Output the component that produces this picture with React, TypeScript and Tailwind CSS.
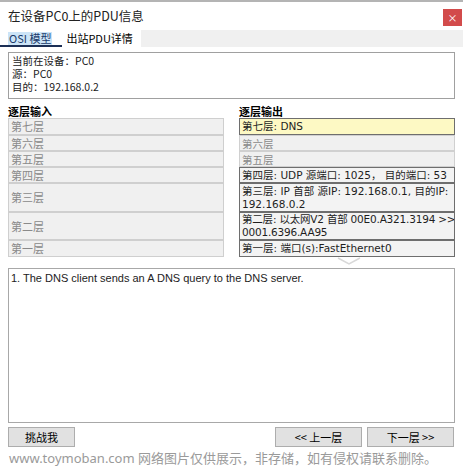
import React from 'react';

const cjk = { fontFamily: '"Noto Sans CJK SC", "Noto Sans", sans-serif' };
const verdana = { fontFamily: '"DejaVu Sans", "Noto Sans CJK SC", sans-serif' };

const inLayers = [
  { label: '第七层', h: 'h-[17px]' },
  { label: '第六层', h: 'h-[16px]' },
  { label: '第五层', h: 'h-[16px]' },
  { label: '第四层', h: 'h-[16px]' },
  { label: '第三层', h: 'h-[29px]' },
  { label: '第二层', h: 'h-[28px]' },
  { label: '第一层', h: 'h-[17px]' },
];

const outLayers = [
  { lines: ['第七层:  DNS'], h: 'h-[17px]', active: true, hl: true },
  { lines: ['第六层'], h: 'h-[16px]', active: false },
  { lines: ['第五层'], h: 'h-[16px]', active: false },
  { lines: ['第四层:  UDP 源端口: 1025， 目的端口: 53'], h: 'h-[16px]', active: true },
  { lines: ['第三层:  IP 首部 源IP: 192.168.0.1, 目的IP:', '192.168.0.2'], h: 'h-[29px]', active: true },
  { lines: ['第二层:  以太网V2 首部 00E0.A321.3194 >>', '0001.6396.AA95'], h: 'h-[28px]', active: true },
  { lines: ['第一层:  端口(s):FastEthernet0'], h: 'h-[17px]', active: true },
];

export default function App() {
  return (
    <div className="w-[463px] h-[466px] bg-white border-t-2 border-[#b4b4b4] relative overflow-hidden text-black" style={cjk}>
      {/* title bar */}
      <div className="h-[28px] flex items-center justify-between pl-[8px]">
        <span className="text-[12.5px] text-[#222]">在设备PC0上的PDU信息</span>
        <div className="w-[19px] h-[17px] bg-[#d24b4b] flex items-center justify-center text-white text-[10px] mr-[1px] mt-[2px]">×</div>
      </div>

      {/* tabs */}
      <div className="flex h-[17px] bg-[#f0f0f0]">
        <div className="bg-white flex items-end pr-[6px]">
          <div className="relative px-[8px] h-full flex items-center">
            <span className="text-[11px] bg-[#cce4f7] text-[#1a3a6a] px-[1px] leading-[13px]">OSI 模型</span>
            <div className="absolute left-0 right-[-2px] bottom-0 h-[2px] bg-[#1c2f55]" />
          </div>
          <div className="pl-[6px] pr-[2px] h-full flex items-center text-[11px]">出站PDU详情</div>
        </div>
      </div>

      {/* info box */}
      <div className="mx-[8px] mt-[5px] h-[47px] border border-[#a0a0a0] px-[3px] pt-[1px] text-[10.5px] text-[#222]">
        <div className="h-[13px] leading-[13px] overflow-visible">当前在设备：PC0</div>
        <div className="h-[13px] leading-[13px]">源：PC0</div>
        <div className="h-[13px] leading-[13px]">目的：192.168.0.2</div>
      </div>

      {/* layers */}
      <div className="flex px-[8px] mt-[5px] gap-[15px]">
        <div className="w-[216px]">
          <div className="text-[11px] font-bold h-[14px] leading-[14px]">逐层输入</div>
          <div className="flex flex-col">
            {inLayers.map((l) => (
              <div key={l.label} className={`${l.h} border border-[#cfcfcf] bg-[#f0f0f0] flex items-center px-[2px] text-[11px] text-[#8a8a8a]`}>
                {l.label}
              </div>
            ))}
          </div>
        </div>
        <div className="w-[216px]">
          <div className="text-[11px] font-bold h-[14px] leading-[14px]">逐层输出</div>
          <div className="flex flex-col">
            {outLayers.map((l) => (
              <div
                key={l.lines[0]}
                className={`${l.h} border flex flex-col justify-center px-[2px] text-[10.5px] leading-[13px] whitespace-nowrap overflow-hidden ${
                  l.active
                    ? `border-[#6e6e6e] text-[#1e1e1e] ${l.hl ? 'bg-[#fdf9c4]' : 'bg-[#f3f3f3]'}`
                    : 'border-[#d0d0d0] bg-[#f0f0f0] text-[#8a8a8a]'
                }`}
                style={l.active ? verdana : cjk}
              >
                {l.lines.map((t) => (
                  <span key={t} className={l.lines[0].startsWith('第二层') ? 'tracking-[-0.2px]' : ''}>{t}</span>
                ))}
              </div>
            ))}
          </div>
          <div className="flex justify-center h-[11px] pl-[4px]">
            <svg width="24" height="9" viewBox="0 0 24 9">
              <path d="M1 1 L12 7 L23 1" fill="none" stroke="#d8d8d8" strokeWidth="1.5" />
            </svg>
          </div>
        </div>
      </div>

      {/* description */}
      <div
        className="mx-[8px] h-[155px] border border-[#a8a8a8] px-[2px] pt-[2px] text-[11px] leading-[14px] text-[#222]"
        style={{ fontFamily: '"Liberation Sans", Arial, sans-serif' }}
      >
        1. The DNS client sends an A DNS query to the DNS server.
      </div>

      {/* buttons */}
      <div className="flex justify-between px-[8px] mt-[4px]">
        <button className="w-[67px] h-[20px] bg-[#e1e1e1] border border-[#adadad] text-[11px]">挑战我</button>
        <div className="flex gap-[5px] mr-[1px]">
          <button className="w-[87px] h-[20px] bg-[#e1e1e1] border border-[#adadad] text-[11px]">&lt;&lt; 上一层</button>
          <button className="w-[87px] h-[20px] bg-[#e1e1e1] border border-[#adadad] text-[11px]">下一层 &gt;&gt;</button>
        </div>
      </div>

      {/* watermark */}
      <div className="absolute left-[9px] top-[448px] text-[13px] leading-[16px] text-[#9a9a9a] whitespace-nowrap" style={{ fontFamily: '"Noto Sans", "Noto Sans CJK SC", sans-serif' }}>
        www.toymoban.com 网络图片仅供展示，非存储，如有侵权请联系删除。
      </div>
    </div>
  );
}
